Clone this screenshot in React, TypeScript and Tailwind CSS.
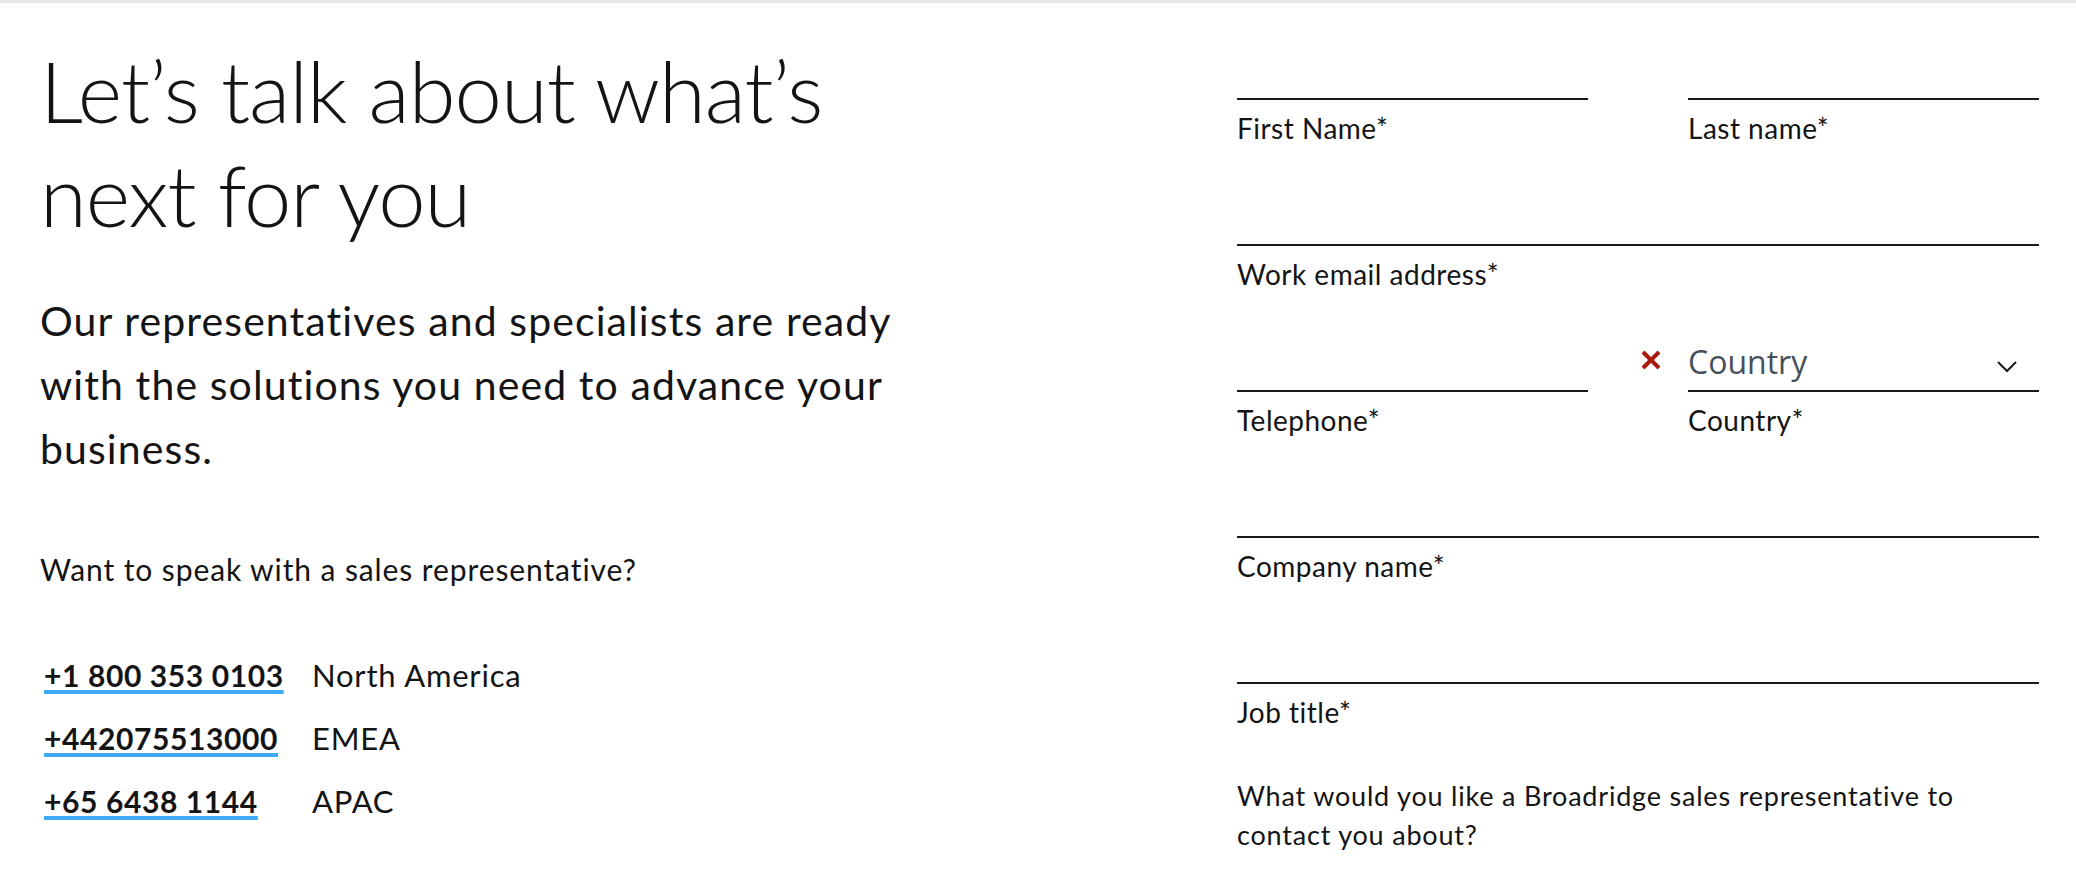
import React from 'react';

const phones = [
  { number: '+1 800 353 0103', region: 'North America' },
  { number: '+442075513000', region: 'EMEA' },
  { number: '+65 6438 1144', region: 'APAC' },
];

const Field: React.FC<{ label: string; className?: string }> = ({ label, className = '' }) => (
  <div className={`h-[146px] ${className}`}>
    <input
      type="text"
      aria-label={label}
      className="block h-[56px] w-full border-b-2 border-[#1a1a1a] bg-transparent text-[28px] outline-none"
    />
    <label className="mt-[10px] block text-[28px] leading-[36px] tracking-[0.5px]">{label}</label>
  </div>
);

const CountryField: React.FC = () => (
  <div className="relative h-[146px]">
    {/* error marker */}
    <svg
      viewBox="0 0 22 22"
      className="absolute left-[-48px] top-[13px] h-[22px] w-[22px] text-[#a61b0e]"
      fill="none"
      stroke="currentColor"
      strokeWidth="4"
    >
      <path d="M3 3l16 16M19 3L3 19" />
    </svg>
    <div className="flex h-[56px] items-end justify-between border-b-2 border-[#1a1a1a] pb-[12px]">
      <span className="font-['Open_Sans',sans-serif] text-[32px] leading-[32px] text-[#46505a]">Country</span>
      <svg viewBox="0 0 20 12" className="mb-[5px] mr-[22px] h-[12px] w-[20px]" fill="none" stroke="#1a1a1a" strokeWidth="2">
        <path d="M1 1l9 9 9-9" />
      </svg>
    </div>
    <label className="mt-[10px] block text-[28px] leading-[36px] tracking-[0.5px]">Country*</label>
  </div>
);

export default function App() {
  return (
    <div className="min-h-screen bg-white font-['Lato',sans-serif] text-[#141414]">
      <div className="h-[3px] bg-[#e8e8e8]" />
      <div className="flex pl-[40px] pr-[37px]">
        {/* Left: intro and phone numbers */}
        <div className="w-[900px]">
          <h1 className="mt-[35px] text-[85px] font-light leading-[104px] tracking-[-1px]">
            Let’s talk about what’s
            <br />
            next for you
          </h1>
          <p className="mt-[43px] text-[41px] leading-[64px] tracking-[1.1px]">
            Our representatives and specialists are ready
            <br />
            with the solutions you need to advance your
            <br />
            business.
          </p>
          <p className="mt-[68px] text-[30px] leading-[40px] tracking-[0.9px]">Want to speak with a sales representative?</p>
          <div className="mt-[55px] grid grid-cols-[272px_auto]">
            {phones.map((p) => (
              <React.Fragment key={p.number}>
                <a
                  href="#"
                  className="ml-[4px] self-start text-[30px] font-bold leading-[63px] tracking-[0.6px] underline decoration-[#3fa9f5] decoration-[4px] underline-offset-[3px]"
                >
                  {p.number}
                </a>
                <span className="text-[31px] leading-[63px] tracking-[0.8px]">{p.region}</span>
              </React.Fragment>
            ))}
          </div>
        </div>

        {/* Right: contact form */}
        <form className="ml-auto w-[802px] pt-[41px]">
          <div className="grid grid-cols-2 gap-x-[100px]">
            <Field label="First Name*" />
            <Field label="Last name*" />
          </div>
          <Field label="Work email address*" />
          <div className="grid grid-cols-2 gap-x-[100px]">
            <Field label="Telephone*" />
            <CountryField />
          </div>
          <Field label="Company name*" />
          <div className="h-[86px]">
            <input
              type="text"
              aria-label="Job title*"
              className="block h-[56px] w-full border-b-2 border-[#1a1a1a] bg-transparent outline-none"
            />
            <label className="mt-[10px] block text-[28px] leading-[36px] tracking-[0.5px]">Job title*</label>
          </div>
          <p className="mt-[62px] text-[27px] leading-[39px] tracking-[0.8px]">
            What would you like a Broadridge sales representative to
            <br />
            contact you about?
          </p>
        </form>
      </div>
    </div>
  );
}
